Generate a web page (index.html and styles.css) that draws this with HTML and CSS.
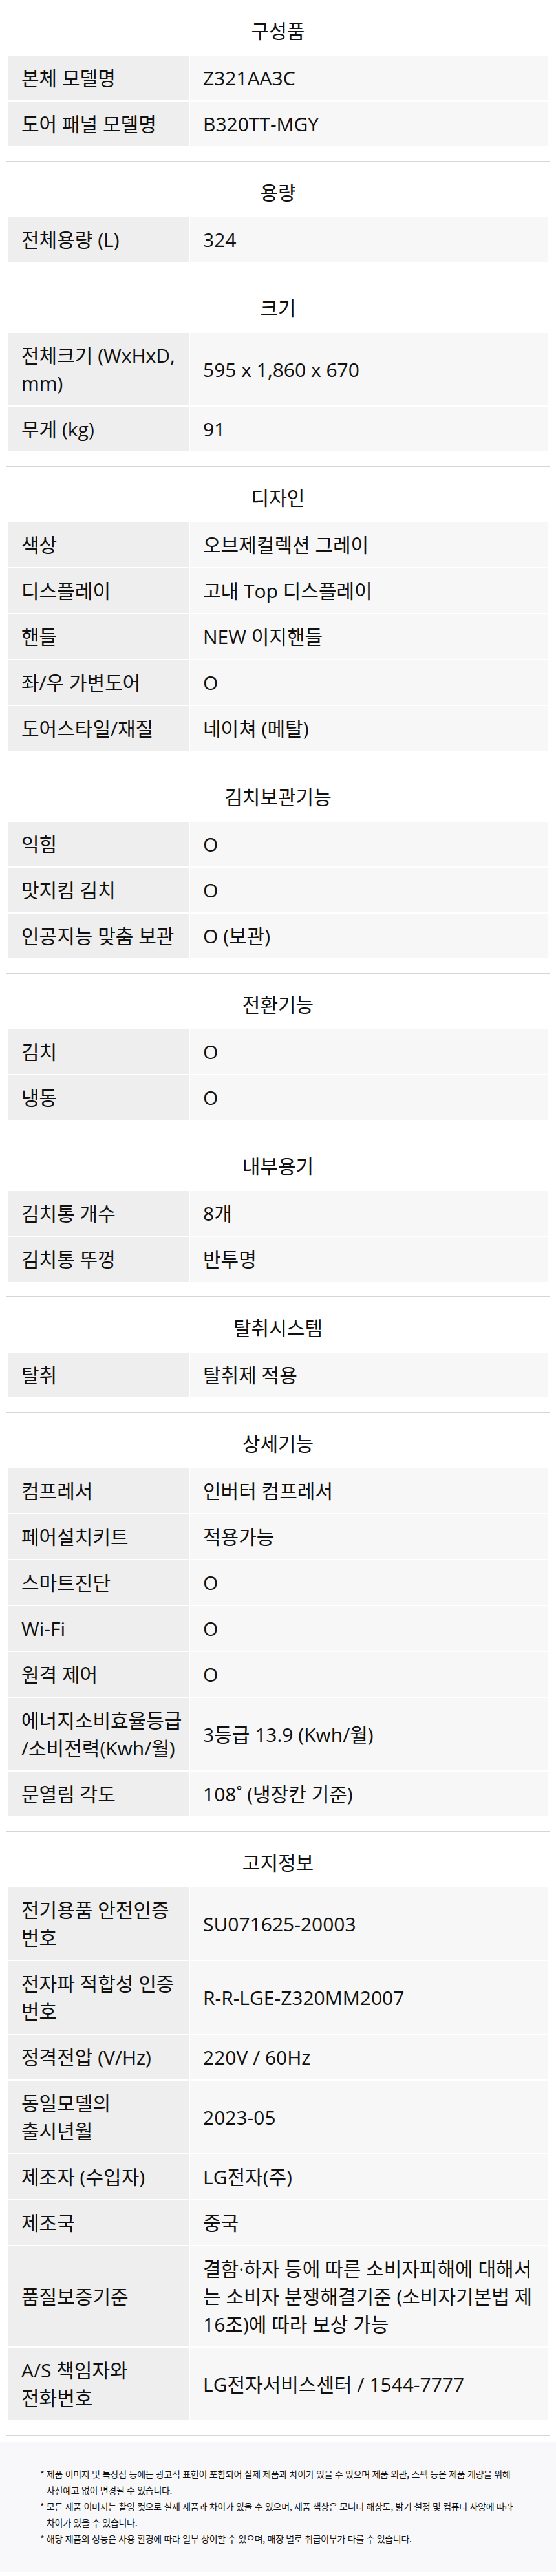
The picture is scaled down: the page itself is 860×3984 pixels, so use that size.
FILE: index.html
```html
<!DOCTYPE html>
<html lang="ko">
<head>
  <meta charset="UTF-8" />
  <title>제품 사양</title>
  <link rel="stylesheet" href="styles.css">
</head>
<body>
  <div class="spec">

    <div class="spec-section">
      <h2 class="spec-title">구성품</h2>
      <table class="spec-table">
        <tr><th>본체 모델명</th><td>Z321AA3C</td></tr>
        <tr><th>도어 패널 모델명</th><td>B320TT-MGY</td></tr>
      </table>
    </div>

    <div class="spec-section">
      <h2 class="spec-title">용량</h2>
      <table class="spec-table">
        <tr><th>전체용량 (L)</th><td>324</td></tr>
      </table>
    </div>

    <div class="spec-section">
      <h2 class="spec-title">크기</h2>
      <table class="spec-table">
        <tr><th>전체크기 (WxHxD, mm)</th><td>595 x 1,860 x 670</td></tr>
        <tr><th>무게 (kg)</th><td>91</td></tr>
      </table>
    </div>

    <div class="spec-section">
      <h2 class="spec-title">디자인</h2>
      <table class="spec-table">
        <tr><th>색상</th><td>오브제컬렉션 그레이</td></tr>
        <tr><th>디스플레이</th><td>고내 Top 디스플레이</td></tr>
        <tr><th>핸들</th><td>NEW 이지핸들</td></tr>
        <tr><th>좌/우 가변도어</th><td>O</td></tr>
        <tr><th>도어스타일/재질</th><td>네이쳐 (메탈)</td></tr>
      </table>
    </div>

    <div class="spec-section">
      <h2 class="spec-title">김치보관기능</h2>
      <table class="spec-table">
        <tr><th>익힘</th><td>O</td></tr>
        <tr><th>맛지킴 김치</th><td>O</td></tr>
        <tr><th>인공지능 맞춤 보관</th><td>O (보관)</td></tr>
      </table>
    </div>

    <div class="spec-section">
      <h2 class="spec-title">전환기능</h2>
      <table class="spec-table">
        <tr><th>김치</th><td>O</td></tr>
        <tr><th>냉동</th><td>O</td></tr>
      </table>
    </div>

    <div class="spec-section">
      <h2 class="spec-title">내부용기</h2>
      <table class="spec-table">
        <tr><th>김치통 개수</th><td>8개</td></tr>
        <tr><th>김치통 뚜껑</th><td>반투명</td></tr>
      </table>
    </div>

    <div class="spec-section">
      <h2 class="spec-title">탈취시스템</h2>
      <table class="spec-table">
        <tr><th>탈취</th><td>탈취제 적용</td></tr>
      </table>
    </div>

    <div class="spec-section">
      <h2 class="spec-title">상세기능</h2>
      <table class="spec-table">
        <tr><th>컴프레서</th><td>인버터 컴프레서</td></tr>
        <tr><th>페어설치키트</th><td>적용가능</td></tr>
        <tr><th>스마트진단</th><td>O</td></tr>
        <tr><th>Wi-Fi</th><td>O</td></tr>
        <tr><th>원격 제어</th><td>O</td></tr>
        <tr><th>에너지소비효율등급<br>/소비전력(Kwh/월)</th><td>3등급 13.9 (Kwh/월)</td></tr>
        <tr><th>문열림 각도</th><td>108˚ (냉장칸 기준)</td></tr>
      </table>
    </div>

    <div class="spec-section">
      <h2 class="spec-title">고지정보</h2>
      <table class="spec-table">
        <tr><th>전기용품 안전인증 번호</th><td>SU071625-20003</td></tr>
        <tr><th>전자파 적합성 인증 번호</th><td>R-R-LGE-Z320MM2007</td></tr>
        <tr><th>정격전압 (V/Hz)</th><td>220V / 60Hz</td></tr>
        <tr><th>동일모델의 출시년월</th><td>2023-05</td></tr>
        <tr><th>제조자 (수입자)</th><td>LG전자(주)</td></tr>
        <tr><th>제조국</th><td>중국</td></tr>
        <tr><th>품질보증기준</th><td>결함·하자 등에 따른 소비자피해에 대해서는 소비자 분쟁해결기준 (소비자기본법 제16조)에 따라 보상 가능</td></tr>
        <tr><th>A/S 책임자와 전화번호</th><td>LG전자서비스센터 / 1544-7777</td></tr>
      </table>
    </div>

  </div>

  <div class="notice">
    <ul class="notice-list">
      <li>* 제품 이미지 및 특장점 등에는 광고적 표현이 포함되어 실제 제품과 차이가 있을 수 있으며 제품 외관, 스펙 등은 제품 개량을 위해 사전예고 없이 변경될 수 있습니다.</li>
      <li>* 모든 제품 이미지는 촬영 컷으로 실제 제품과 차이가 있을 수 있으며, 제품 색상은 모니터 해상도, 밝기 설정 및 컴퓨터 사양에 따라 차이가 있을 수 있습니다.</li>
      <li>* 해당 제품의 성능은 사용 환경에 따라 일부 상이할 수 있으며, 매장 별로 취급여부가 다를 수 있습니다.</li>
    </ul>
  </div>
</body>
</html>
```

FILE: styles.css
```css
body {
  margin: 0;
  background: #fff;
  color: #111;
  font-family: "Open Sans", "Noto Sans CJK KR", sans-serif;
}

.spec-section {
  margin: 0 10px;
  padding: 27px 0 21px;
  border-bottom: 1px solid #d6d6d6;
}
.spec-title {
  margin: 0 0 15px;
  font-size: 30px;
  font-weight: normal;
  line-height: 42px;
  text-align: center;
}

.spec-table {
  width: 100%;
  table-layout: fixed;
  border-collapse: separate;
  border-spacing: 2px;
  font-size: 30px;
  line-height: 43px;
}
.spec-table th,
.spec-table td {
  padding: 13px 20px;
  text-align: left;
  font-weight: normal;
  vertical-align: middle;
}
.spec-table th {
  box-sizing: border-box;
  width: 280px;
  padding-left: 21px;
  padding-right: 6px;
  background: #eeeeee;
  word-break: keep-all;
}
.spec-table td {
  background: #f7f7f7;
}

.notice {
  margin-top: 10px;
  padding: 37px 62px 39px;
  background: #f8f8fa;
}
.notice-list {
  margin: 0;
  padding: 0;
  list-style: none;
  font-family: "Noto Sans CJK KR", sans-serif;
  font-size: 14px;
  line-height: 25px;
  letter-spacing: -0.3px;
  color: #111;
  word-break: keep-all;
}
.notice-list li {
  padding-left: 10px;
  text-indent: -10px;
}
```
